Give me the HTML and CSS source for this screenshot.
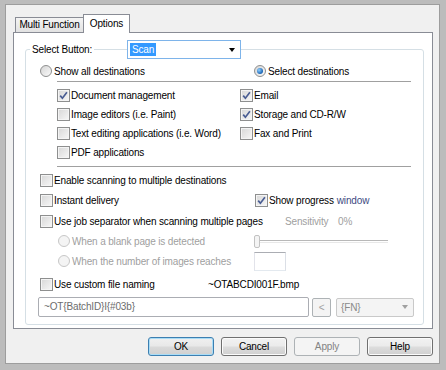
FILE: index.html
```html
<!DOCTYPE html>
<html lang="en">
<head>
    <meta charset="UTF-8">
    <title>Options</title>
    <link rel="stylesheet" href="styles.css">
</head>
<body>
    <div class="window">
        <div class="frame">
            <div class="tabs">
                <div class="tab">Multi Function</div>
                <div class="tab active">Options</div>
            </div>

            <div class="panel">
                <div class="group">
                    <div class="group-head">
                        <span class="legend-label">Select Button:</span>
                        <div class="combo focused">
                            <span class="selected">Scan</span>
                            <span class="combo-arrow"></span>
                        </div>
                    </div>

                    <div class="row radios">
                        <label class="opt"><span class="radio"></span>Show all destinations</label>
                        <label class="opt"><span class="radio on"></span>Select destinations</label>
                    </div>

                    <div class="sep"></div>

                    <div class="dest-grid">
                        <label class="opt"><span class="cb checked"></span>Document management</label>
                        <label class="opt"><span class="cb checked"></span>Email</label>
                        <label class="opt"><span class="cb"></span>Image editors (i.e. Paint)</label>
                        <label class="opt"><span class="cb checked"></span>Storage and CD-R/W</label>
                        <label class="opt"><span class="cb"></span>Text editing applications (i.e. Word)</label>
                        <label class="opt"><span class="cb"></span>Fax and Print</label>
                        <label class="opt"><span class="cb"></span>PDF applications</label>
                    </div>

                    <div class="sep"></div>

                    <div class="lower">
                        <div class="row first">
                            <label class="opt"><span class="cb"></span>Enable scanning to multiple destinations</label>
                        </div>
                        <div class="row two-col">
                            <label class="opt"><span class="cb"></span>Instant delivery</label>
                            <label class="opt"><span class="cb checked"></span>Show progress <span class="hover">window</span></label>
                        </div>
                        <div class="row job">
                            <label class="opt"><span class="cb"></span>Use job separator when scanning multiple pages</label>
                            <span class="muted sens">Sensitivity</span>
                            <span class="muted">0%</span>
                        </div>
                        <div class="row sub">
                            <label class="opt muted"><span class="radio off"></span>When a blank page is detected</label>
                            <div class="slider">
                                <span class="thumb"></span>
                                <span class="track"></span>
                            </div>
                        </div>
                        <div class="row sub">
                            <label class="opt muted"><span class="radio off"></span>When the number of images reaches</label>
                            <span class="small-box"></span>
                        </div>
                        <div class="row naming">
                            <label class="opt"><span class="cb"></span>Use custom file naming</label>
                            <span>~OTABCDI001F.bmp</span>
                        </div>
                        <div class="name-row">
                            <div class="textbox">~OT{BatchID}I{#03b}</div>
                            <div class="mini-btn">&lt;</div>
                            <div class="combo disabled">
                                <span class="combo-text">{FN}</span>
                                <span class="combo-arrow"></span>
                            </div>
                        </div>
                    </div>
                </div>
            </div>

            <div class="buttons">
                <button class="btn default">OK</button>
                <button class="btn">Cancel</button>
                <button class="btn" disabled>Apply</button>
                <button class="btn">Help</button>
            </div>
        </div>
    </div>
</body>
</html>
```

FILE: styles.css
```css
body {
    margin: 0;
    font-family: "Liberation Sans", Arial, sans-serif;
    font-size: 10px;
    letter-spacing: -0.15px;
    color: #000;
}
.window {
    width: 446px;
    height: 370px;
    box-sizing: border-box;
    border-style: solid;
    border-color: #bcbcbc;
    border-width: 4px 6px 6px 5px;
}
.frame {
    height: 100%;
    box-sizing: border-box;
    border: 1px solid #9d9d9d;
    background: #f0f0f0;
}

/* tabs */
.tabs {
    display: flex;
    align-items: flex-end;
    padding: 9px 0 0 9px;
}
.tab {
    box-sizing: border-box;
    width: 69px;
    height: 15px;
    line-height: 14px;
    text-align: center;
    border: 1px solid #898c95;
    border-bottom: none;
    background: linear-gradient(#f4f4f4, #e2e2e2);
}
.tab.active {
    width: 47px;
    height: 19px;
    line-height: 17px;
    margin-left: -1px;
    margin-bottom: -1px;
    background: #fff;
    position: relative;
    z-index: 1;
}
.panel {
    box-sizing: border-box;
    width: 420px;
    height: 297px;
    margin-left: 7px;
    border: 1px solid #898c95;
    background: #fff;
}

/* group box */
.group {
    box-sizing: border-box;
    width: 399px;
    height: 276px;
    margin: 16px 0 0 11px;
    border: 1px solid #d5dfe5;
    border-radius: 3px;
}
.group-head {
    display: grid;
    grid-template-columns: 97px 114px;
    align-items: center;
    height: 19px;
    margin-top: -10px;
    padding-left: 4px;
}
.legend-label {
    justify-self: start;
    background: #fff;
    padding: 0 2px;
}
.combo {
    box-sizing: border-box;
    display: flex;
    align-items: center;
    height: 19px;
    border: 1px solid #abadb3;
    background: #fff;
}
.combo.focused {
    border-color: #7eb4ea;
}
.selected {
    margin-left: 2px;
    padding: 0 2px;
    line-height: 13px;
    background: #3399ff;
    color: #fff;
}
.combo-arrow {
    margin-left: auto;
    width: 17px;
    height: 100%;
    display: flex;
    align-items: center;
    justify-content: center;
}
.combo-arrow::after {
    content: "";
    border-left: 3.5px solid transparent;
    border-right: 3.5px solid transparent;
    border-top: 4px solid #000;
}

/* rows */
.row {
    display: grid;
    align-items: center;
    height: 20px;
}
.radios {
    grid-template-columns: 214px auto;
    height: 14px;
    margin-top: 5px;
    padding-left: 14px;
}
.opt {
    display: flex;
    align-items: center;
    white-space: nowrap;
}
.sep {
    margin: 3px 12px 0 31px;
    border-top: 1px solid #a0a0a0;
}
.dest-grid {
    display: grid;
    grid-template-columns: 183px auto;
    grid-auto-rows: 19px;
    align-items: center;
    margin-top: 4px;
    padding-left: 31px;
}
.dest-grid + .sep {
    margin-top: 4px;
}
.lower {
    padding-left: 14px;
}
.lower .first {
    margin-top: 3px;
}
.two-col {
    grid-template-columns: 215px auto;
}
.job {
    grid-template-columns: 245px 53px auto;
    margin-top: 1px;
}
.sub {
    grid-template-columns: 196px auto;
    padding-left: 18px;
}
.naming {
    grid-template-columns: 168px auto;
    margin-top: 3px;
}
.muted {
    color: #a0a0a0;
}
.hover {
    color: #3c4a82;
    margin-left: 3px;
}

/* checkbox / radio */
.cb {
    box-sizing: border-box;
    flex: none;
    width: 13px;
    height: 13px;
    margin-right: 1px;
    border: 1px solid #8e8f8f;
    background: linear-gradient(135deg, #d7d7d7, #f7f7f7);
    box-shadow: inset 0 0 0 1px #f4f4f4;
}
.cb.checked {
    background:
        url("data:image/svg+xml;utf8,<svg xmlns='http://www.w3.org/2000/svg' width='11' height='11'><path d='M2.2 5.6 L4.4 8.2 L8.9 2.3' fill='none' stroke='%23495d93' stroke-width='1.7'/></svg>") center / 11px 11px no-repeat,
        linear-gradient(135deg, #d7d7d7, #f7f7f7);
}
.radio {
    box-sizing: border-box;
    flex: none;
    width: 12px;
    height: 12px;
    margin-right: 2px;
    border: 1px solid #8e8f8f;
    border-radius: 50%;
    background: linear-gradient(135deg, #d5d5d5, #fafafa);
    display: flex;
    align-items: center;
    justify-content: center;
}
.radio.on::after {
    content: "";
    width: 6px;
    height: 6px;
    border-radius: 50%;
    background: radial-gradient(circle at 35% 35%, #8fd0ff, #1b64b4 70%);
}
.radio.off {
    border-color: #c7c7c7;
    background: #f4f4f4;
}

/* slider */
.slider {
    display: flex;
    align-items: center;
    width: 134px;
    height: 13px;
}
.thumb {
    box-sizing: border-box;
    width: 6px;
    height: 13px;
    border: 1px solid #c2c2c2;
    border-radius: 2px;
    background: #f4f4f4;
}
.track {
    flex: 1;
    height: 1px;
    border-top: 1px solid #b8b8b8;
    border-bottom: 1px solid #e8e8e8;
}
.small-box {
    box-sizing: border-box;
    width: 32px;
    height: 19px;
    border: 1px solid #abadb3;
    border-color: #abadb3 #dbdfe6 #e3e9ef #e2e3ea;
}

/* naming input */
.name-row {
    display: flex;
    align-items: center;
    margin: 3px 0 0 -2px;
}
.textbox {
    box-sizing: border-box;
    width: 271px;
    height: 20px;
    line-height: 18px;
    padding-left: 5px;
    border: 1px solid #abadb3;
    border-radius: 2px;
    color: #6d6d6d;
}
.mini-btn {
    box-sizing: border-box;
    width: 19px;
    height: 19px;
    margin-left: 3px;
    line-height: 17px;
    text-align: center;
    border: 1px solid #adb2b5;
    border-radius: 2px;
    background: #f4f4f4;
    color: #a0a0a0;
}
.combo.disabled {
    width: 78px;
    margin-left: 5px;
    border-color: #c9c9c9;
    border-radius: 2px;
    background: #f4f4f4;
    color: #8a8a8a;
}
.combo-text {
    padding-left: 4px;
}
.combo.disabled .combo-arrow::after {
    border-top-color: #a0a0a0;
}

/* dialog buttons */
.buttons {
    display: flex;
    justify-content: flex-end;
    gap: 7px;
    margin-top: 8px;
    padding-right: 6px;
}
.btn {
    box-sizing: border-box;
    width: 66px;
    height: 19px;
    padding: 0;
    font: inherit;
    letter-spacing: inherit;
    border: 1px solid #707070;
    border-radius: 3px;
    background: linear-gradient(#f2f2f2 0%, #ebebeb 48%, #dddddd 52%, #cfcfcf 100%);
    box-shadow: inset 0 0 0 1px #fbfbfb;
    color: #000;
}
.btn.default {
    border-color: #3c7fb1;
    box-shadow: inset 0 0 0 1px #a9dcf6;
    background: linear-gradient(#f0f0f0 0%, #e8e8e8 48%, #dadada 52%, #cfcfcf 100%);
}
.btn:disabled {
    border-color: #adb2b5;
    background: #f4f4f4;
    box-shadow: none;
    color: #838383;
}
```
